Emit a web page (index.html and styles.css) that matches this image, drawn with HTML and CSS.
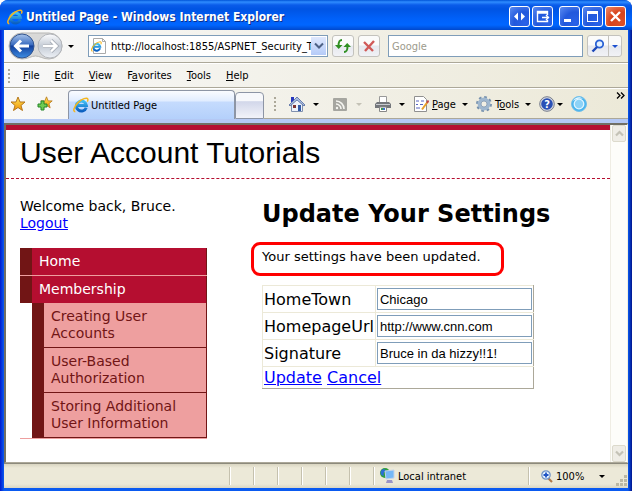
FILE: index.html
```html
<!DOCTYPE html>
<html lang="en">
<head>
  <meta charset="UTF-8">
  <meta name="viewport" content="width=device-width, initial-scale=1.0">
  <title>Untitled Page</title>
  <link rel="stylesheet" href="styles.css">
</head>
<body>
  <!-- shared drawings -->
  <svg class="defs" width="0" height="0" aria-hidden="true">
    <defs>
      <linearGradient id="blue" x1="0" y1="0" x2="0" y2="1">
        <stop offset="0" stop-color="#3fc0f4"/>
        <stop offset="1" stop-color="#0c5fc0"/>
      </linearGradient>
      <linearGradient id="gold" x1="0" y1="0" x2="0" y2="1">
        <stop offset="0" stop-color="#ffe65a"/>
        <stop offset="1" stop-color="#ee9205"/>
      </linearGradient>
      <linearGradient id="back" x1="0" y1="0" x2="0" y2="1">
        <stop offset="0" stop-color="#a9c4ea"/>
        <stop offset="0.45" stop-color="#3a6cc0"/>
        <stop offset="0.5" stop-color="#123f9c"/>
        <stop offset="1" stop-color="#3f8fe4"/>
      </linearGradient>
      <linearGradient id="fwd" x1="0" y1="0" x2="0" y2="1">
        <stop offset="0" stop-color="#fdfdfe"/>
        <stop offset="0.5" stop-color="#c4cbd5"/>
        <stop offset="1" stop-color="#eef1f6"/>
      </linearGradient>
      <symbol id="ie" viewBox="0 0 16 16">
        <path d="M13.2 10.6A5 5 0 1 1 13.4 8.4H5" fill="none" stroke="url(#blue)" stroke-width="3"/>
        <path d="M2.3 14.8C-.6 14.6 1 9.600 5 5.600 9 1.600 14 .2 14.800 2c.3.8 0 1.700-.5 2.600" fill="none" stroke="#f5b61e" stroke-width="1.500"/>
      </symbol>
      <symbol id="star" viewBox="0 0 16 16">
        <path d="M8 1l2 5h5l-4 3.500 1.500 5L8 11.500l-4.500 3 1.500-5L1 6h5z" fill="url(#gold)" stroke="#b5771c"/>
      </symbol>
    </defs>
  </svg>

  <div class="window">
    <header class="titlebar">
      <svg class="icon16" viewBox="0 0 16 16"><use href="#ie"/></svg>
      <span class="caption">Untitled Page - Windows Internet Explorer</span>
      <div class="controls">
        <button class="ctl" aria-label="Move">
          <svg width="19" height="19" viewBox="0 0 19 19"><path d="M8 5.500v8l-4-4zM11 5.500v8l4-4z" fill="#fff"/></svg>
        </button>
        <button class="ctl gap" aria-label="Send to screen">
          <svg width="19" height="19" viewBox="0 0 19 19"><path d="M14.500 8V4.500h-10v10h10V13M4 6h11M9 10.500h6M13 8l2.500 2.500L13 13" fill="none" stroke="#fff" stroke-width="1.400"/></svg>
        </button>
        <button class="ctl" aria-label="Minimize">
          <svg width="19" height="19" viewBox="0 0 19 19"><path d="M4 12h7v3H4z" fill="#fff"/></svg>
        </button>
        <button class="ctl" aria-label="Maximize">
          <svg width="19" height="19" viewBox="0 0 19 19"><path d="M4 4h11v11H4zM5 7v7h9V7z" fill="#fff" fill-rule="evenodd"/></svg>
        </button>
        <button class="ctl close" aria-label="Close">
          <svg width="19" height="19" viewBox="0 0 19 19"><path d="M5 5l9 9M14 5l-9 9" stroke="#fff" stroke-width="2.400"/></svg>
        </button>
      </div>
    </header>

    <div class="chrome">
      <div class="addressbar">
        <button class="travel" aria-label="Back and forward">
          <svg width="56" height="28" viewBox="0 0 56 28">
            <path d="M14 1h27a13 13 0 0 1 0 26c-6 0-9-3-13.500-3S20 27 14 27a13 13 0 0 1 0-26z" fill="#d9d9d8" stroke="#b7b7b5"/>
            <circle cx="14" cy="14" r="12" fill="url(#back)" stroke="#33558f"/>
            <path d="M21 14H9M13 8.500L7.500 14l5.500 5.500" fill="none" stroke="#fff" stroke-width="3"/>
            <circle cx="42" cy="14" r="12" fill="url(#fwd)" stroke="#b3b6bb"/>
            <path d="M35 14h12M43 8.500l5.500 5.500-5.500 5.500" fill="none" stroke="#a7adb6" stroke-width="4"/>
            <path d="M35 14h12M43 8.500l5.500 5.500-5.500 5.500" fill="none" stroke="#fff" stroke-width="2.400"/>
          </svg>
        </button>
        <span class="arrow"></span>
        <div class="address">
          <svg width="16" height="18" viewBox="0 0 16 18">
            <path d="M2.500 1.500h9l3 3v12h-12z" fill="#fff" stroke="#aaa"/>
            <path d="M11.500 1.500v3h3" fill="none" stroke="#aaa"/>
            <use href="#ie" x="0" y="4" width="11" height="11"/>
          </svg>
          <input class="url" type="text" aria-label="Address" value="http://localhost:1855/ASPNET_Security_Tutorial">
          <button class="drop" aria-label="Show addresses">
            <svg width="10" height="8" viewBox="0 0 10 8"><path d="M1 1.500l4 4 4-4" fill="none" stroke="#4d6185" stroke-width="2"/></svg>
          </button>
        </div>
        <button class="tool" aria-label="Refresh">
          <svg width="16" height="14" viewBox="0 0 16 14">
            <path d="M7 1C4 1 3.500 3 3.500 7M9 13c3 0 3.500-2 3.500-6" fill="none" stroke="#2f8f22" stroke-width="2"/>
            <path d="M0 6h7.500L3.700 10zM8.500 8H16l-3.800-4z" fill="#2f8f22"/>
          </svg>
        </button>
        <button class="tool" aria-label="Stop">
          <svg width="14" height="14" viewBox="0 0 14 14"><path d="M2 3l9 9M12 2L3 12" stroke="#d05a58" stroke-width="2.400"/></svg>
        </button>
        <input class="search" type="text" aria-label="Search" placeholder="Google">
        <div class="split">
          <button class="find" aria-label="Search">
            <svg width="14" height="14" viewBox="0 0 14 14"><circle cx="8.500" cy="5" r="3.700" fill="#e3f0ff" stroke="#2a62d5" stroke-width="1.800"/><path d="M6 8l-4.500 4.500" stroke="#1c47b8" stroke-width="2.400"/></svg>
          </button>
          <button class="more" aria-label="Search options"><span class="arrow blue"></span></button>
        </div>
      </div>

      <nav class="menubar">
        <span class="grip"></span>
        <button><u>F</u>ile</button>
        <button><u>E</u>dit</button>
        <button><u>V</u>iew</button>
        <button>F<u>a</u>vorites</button>
        <button><u>T</u>ools</button>
        <button><u>H</u>elp</button>
      </nav>

      <div class="tabbar">
        <div class="favorites">
          <button aria-label="Favorites"><svg class="icon16" viewBox="0 0 16 16"><use href="#star"/></svg></button>
          <button aria-label="Add to favorites">
            <svg class="icon16" viewBox="0 0 16 16">
              <use href="#star" x="3" y="0" width="13" height="13"/>
              <path d="M4 5h3v3h3v3H7v3H4v-3H1V8h3z" fill="#6ecb52" stroke="#24852a"/>
            </svg>
          </button>
        </div>
        <button class="tab"><svg class="icon16" viewBox="0 0 16 16"><use href="#ie"/></svg>Untitled Page</button>
        <button class="newtab" aria-label="New tab"></button>
        <div class="commands">
          <span class="grip"></span>
          <button class="home" aria-label="Home">
            <svg class="icon16" viewBox="0 0 16 16">
              <path d="M2.500 8v7.500h11V8L8 3z" fill="#eef2fa" stroke="#8090ae"/>
              <path d="M2 1h3v5H2z" fill="#2637bd"/>
              <path d="M0 9l8-8 8 8-1 1-7-6-7 6z" fill="#a9bde0" stroke="#53699e" stroke-width=".8"/>
              <path d="M4 9h3v3H4z" fill="#7b3434"/>
              <path d="M9 9h3v6H9z" fill="#315aa8"/>
            </svg>
            <span class="arrow"></span>
          </button>
          <button class="feeds" aria-label="Feeds" disabled>
            <svg class="icon16" viewBox="0 0 16 16">
              <rect x="1" y="2" width="14" height="13" rx="1" fill="#a6a6a0"/>
              <path d="M4 8a5 5 0 0 1 5 5M4 5a8 8 0 0 1 8 8" fill="none" stroke="#f5f5f0" stroke-width="1.600"/>
              <circle cx="5" cy="12" r="1.200" fill="#f5f5f0"/>
            </svg>
            <span class="arrow dim"></span>
          </button>
          <button class="print" aria-label="Print">
            <svg class="icon16" viewBox="0 0 16 16">
              <path d="M4.500 6V.5h7V6" fill="#fff" stroke="#999"/>
              <path d="M2 6h12l2 2v4H0V8z" fill="#74777b"/>
              <path d="M1 8h14v1H1z" fill="#c9ccd0"/>
              <path d="M4.500 11h7v4.500h-7z" fill="#fff" stroke="#888"/>
              <path d="M6 12h2v2H6z" fill="#3c9a4e"/><path d="M8 12h2v2H8z" fill="#3a6fd0"/>
            </svg>
            <span class="arrow"></span>
          </button>
          <button class="page">
            <svg class="icon16" viewBox="0 0 16 16">
              <path d="M1.500.5h9l3 3v12h-12z" fill="#fff" stroke="#909090"/>
              <path d="M3 5h3M8 5h3M3 12h4" stroke="#5865c0"/>
              <path d="M3 8.500h2M7 8.500h3" stroke="#5865c0"/>
              <path d="M14.500 6L9 13.500" stroke="#e9a12c" stroke-width="2"/>
              <path d="M15.500 4.500L14 7" stroke="#c54848" stroke-width="2"/>
            </svg>
            <span class="label"><u>P</u>age</span>
            <span class="arrow"></span>
          </button>
          <button class="tools">
            <svg class="icon16" viewBox="0 0 16 16">
              <circle cx="8" cy="8" r="6.700" fill="none" stroke="#7590ad" stroke-width="2.500" stroke-dasharray="2.600 2.660"/>
              <circle cx="8" cy="8" r="4.700" fill="none" stroke="#9fb7cf" stroke-width="3.400"/>
              <circle cx="8" cy="8" r="3" fill="#f1efe4" stroke="#7d96b2" stroke-width=".8"/>
            </svg>
            <span class="label">T<u>o</u>ols</span>
            <span class="arrow"></span>
          </button>
          <button class="help" aria-label="Help">
            <svg class="icon16" viewBox="0 0 16 16">
              <circle cx="8" cy="8" r="7.300" fill="#d5d8e0" stroke="#777d8c"/>
              <circle cx="8" cy="8" r="5.800" fill="#2950b5"/>
              <text class="mark" x="8" y="12" text-anchor="middle">?</text>
            </svg>
            <span class="arrow"></span>
          </button>
          <button class="orb" aria-label="Add-on">
            <svg class="icon16" viewBox="0 0 16 16">
              <circle cx="8" cy="8" r="7.500" fill="#49b4ee" stroke="#74bfe8"/>
              <circle cx="8" cy="8" r="4.800" fill="#8cd2f7" stroke="#dff4ff" stroke-width="1.300"/>
              <path d="M2 5c2-4 7-5 10-2-4-1-7 0-10 2z" fill="#e8f8ff"/>
            </svg>
          </button>
          <button class="overflow" aria-label="More commands">
            <svg width="9" height="7" viewBox="0 0 9 7"><path d="M1 .5l3 3-3 3M5 .5l3 3-3 3" fill="none" stroke="#000" stroke-width="1.300"/></svg>
          </button>
        </div>
      </div>
    </div>

    <div class="viewport">
      <main class="document">
        <h1 class="site-title">User Account Tutorials</h1>
        <div class="columns">
          <aside class="sidebar">
            <div class="login">Welcome back, Bruce.<br><a href="#">Logout</a></div>
            <ul class="sitemenu">
              <li><a href="#">Home</a></li>
              <li>
                <a href="#">Membership</a>
                <ul>
                  <li><a href="#">Creating User Accounts</a></li>
                  <li><a href="#">User-Based Authorization</a></li>
                  <li><a href="#">Storing Additional User Information</a></li>
                </ul>
              </li>
            </ul>
          </aside>
          <section class="content">
            <h2>Update Your Settings</h2>
            <p class="message">Your settings have been updated.</p>
            <form>
              <table class="details">
                <tr>
                  <td><label for="town">HomeTown</label></td>
                  <td><input id="town" type="text" value="Chicago"></td>
                </tr>
                <tr>
                  <td><label for="homepage">HomepageUrl</label></td>
                  <td><input id="homepage" type="text" value="http://www.cnn.com"></td>
                </tr>
                <tr>
                  <td><label for="signature">Signature</label></td>
                  <td><input id="signature" type="text" value="Bruce in da hizzy!!1!"></td>
                </tr>
                <tr>
                  <td colspan="2"><a href="#">Update</a> <a href="#">Cancel</a></td>
                </tr>
              </table>
            </form>
          </section>
        </div>
      </main>
      <div class="scrollbar">
        <button aria-label="Scroll up"><svg width="9" height="7" viewBox="0 0 9 7"><path d="M1 5.500L4.500 2 8 5.500" fill="none" stroke="#c4c2b6" stroke-width="2.200"/></svg></button>
        <button aria-label="Scroll down"><svg width="9" height="7" viewBox="0 0 9 7"><path d="M1 1.500L4.500 5 8 1.500" fill="none" stroke="#c4c2b6" stroke-width="2.200"/></svg></button>
      </div>
    </div>

    <footer class="statusbar">
      <div class="pane"></div>
      <div class="pane small"></div>
      <div class="pane small"></div>
      <div class="pane small"></div>
      <div class="pane small"></div>
      <div class="pane small"></div>
      <div class="pane small"></div>
      <div class="pane zone">
        <svg class="icon16" viewBox="0 0 16 16">
          <circle cx="6" cy="5" r="5" fill="#2f9f3e"/>
          <path d="M2 3c2-3 5-2 4 0S4 5 5 8C2 8 1 5 2 3z" fill="#2a6fd6"/>
          <path d="M6 3l9-1v8l-8 1z" fill="#75b8f7" stroke="#c3d4ea"/>
          <path d="M8 12h5l1 3H7z" fill="#9a94c6"/>
        </svg>
        Local intranet
      </div>
      <div class="pane zoom">
        <svg width="12" height="13" viewBox="0 0 12 13">
          <path d="M7 8l4 4" stroke="#b07848" stroke-width="2.200"/>
          <circle cx="5" cy="5" r="4.200" fill="#e4f2ff" stroke="#6f92c4" stroke-width="1.200"/>
          <path d="M5 2.500v5M2.500 5h5" stroke="#1f54c4" stroke-width="1.800"/>
        </svg>
        <span>100%</span>
        <span class="arrow"></span>
      </div>
      <svg class="resize" width="12" height="12" viewBox="0 0 12 12">
        <path d="M8 0h3v3H8zM4 4h3v3H4zM8 4h3v3H8zM0 8h3v3H0zM4 8h3v3H4zM8 8h3v3H8z" fill="#bcb8a4"/>
      </svg>
    </footer>
  </div>
</body>
</html>
```
FILE: styles.css
```css
*{
  box-sizing: border-box;
  margin: 0;
  padding: 0;
}
body{
  background: #fff;
  color: #000;
  font-family: "DejaVu Sans Condensed", Tahoma, sans-serif;
  font-size: 11px;
}
button{
  border: none;
  background: none;
  color: inherit;
  font: inherit;
  white-space: nowrap;
}
svg{
  display: block;
  flex: none;
}
.defs{
  position: absolute;
}
.icon16{
  width: 16px;
  height: 16px;
}

.window{
  display: flex;
  flex-direction: column;
  min-height: 100vh;
  padding: 0 4px 3px;
  background: linear-gradient(90deg, #0019cf, #0a5af0 4px, #0a5af0 calc(100% - 4px), #00138c);
  border-radius: 8px 8px 0 0;
  overflow: hidden;
}

/* title bar */
.titlebar{
  display: flex;
  align-items: center;
  height: 30px;
  margin: 0 -4px;
  padding: 3px 6px 0 7px;
  background: linear-gradient(#0053d8 0, #2f8cff 2px, #0a5cea 5px, #0054e3 9px, #0061fa 19px, #0066ff 25px, #0048cc 100%);
}
.caption{
  flex: 1;
  margin-left: 3px;
  color: #fff;
  font-size: 12px;
  font-weight: bold;
  text-shadow: 1px 1px 0 #0a2f8c;
  white-space: nowrap;
}
.controls{
  display: flex;
  gap: 2px;
}
.ctl{
  width: 21px;
  height: 21px;
  border: 1px solid #fff;
  border-radius: 3px;
  background: radial-gradient(circle at 80% 85%, #2a62e8, #2258dc 50%, #5c8cf2);
}
.ctl.gap{
  margin-right: 4px;
}
.ctl.close{
  background: radial-gradient(circle at 80% 85%, #dc5028, #d8431c 50%, #f08c6c);
}

/* toolbars */
.chrome{
  background: linear-gradient(90deg, #f8f8f8, #ece9d8);
}
.addressbar{
  display: flex;
  align-items: center;
  height: 33px;
  padding: 0 6px 0 4px;
  border-bottom: 1px solid #aca899;
}
.arrow{
  flex: none;
  border: 3px solid transparent;
  border-top-color: #000;
  border-bottom: none;
}
.arrow.blue{
  border-top-color: #1c50d0;
}
.arrow.dim{
  border-top-color: #c4c2b6;
}
.travel + .arrow{
  margin: 0 14px 0 4px;
}
.address{
  display: flex;
  flex: 1;
  align-items: center;
  height: 22px;
  margin-right: 4px;
  padding: 1px 1px 1px 2px;
  border: 1px solid #7f9db9;
  background: #fff;
}
.url{
  flex: 1;
  width: 0;
  min-width: 0;
  margin-left: 4px;
  border: none;
  outline: none;
  font: inherit;
}
.drop{
  display: flex;
  align-items: center;
  justify-content: center;
  width: 15px;
  height: 18px;
  background: linear-gradient(#dfe8fd, #b5cbf8);
}
.tool{
  display: flex;
  align-items: center;
  justify-content: center;
  width: 22px;
  height: 22px;
  margin-right: 4px;
  border: 1px solid #c3c2bd;
  border-radius: 3px;
  background: linear-gradient(#fbfbfa 45%, #e6e8ee 50%, #f1f2f6);
}
.search{
  width: 195px;
  height: 22px;
  margin: 0 4px;
  padding: 0 3px;
  border: 1px solid #7f9db9;
  background: #fff;
  font: inherit;
}
.search::placeholder{
  color: #9c9a8c;
}
.split{
  display: flex;
  width: 35px;
  height: 22px;
  border: 1px solid #c3c2bd;
  border-radius: 3px;
  background: linear-gradient(#fbfbfa 45%, #e6e8ee 50%, #f1f2f6);
}
.find, .more{
  display: flex;
  flex: 1;
  align-items: center;
  justify-content: center;
}
.find{
  flex: none;
  width: 21px;
  border-right: 1px solid #c3c2bd;
}

.menubar{
  display: flex;
  align-items: center;
  height: 25px;
  padding-left: 4px;
  border-top: 1px solid #fff;
  border-bottom: 1px solid #aca899;
}
.menubar button{
  margin-right: 15px;
}
.grip{
  flex: none;
  width: 2px;
  height: 14px;
  margin-right: 13px;
  background: repeating-linear-gradient(#aca899 0, #aca899 2px, transparent 2px, transparent 4px);
}

.tabbar{
  display: flex;
  align-items: flex-end;
  height: 35px;
  border-top: 1px solid #fff;
  border-bottom: 4px solid #b4c8f4;
}
.favorites{
  display: flex;
  align-self: center;
  gap: 11px;
  width: 64px;
  padding-left: 6px;
}
.tab{
  display: flex;
  align-items: center;
  width: 167px;
  height: 29px;
  padding-left: 4px;
  border: 1px solid #8d95a5;
  border-bottom: none;
  border-radius: 4px 4px 0 0;
  background: linear-gradient(#fafcff, #e2edff 35%, #c5dbfd 40%, #b4d0fb);
}
.tab .icon16{
  margin-right: 2px;
}
.newtab{
  width: 29px;
  height: 27px;
  border: 1px solid #8d95a5;
  border-radius: 4px 4px 0 0;
  background: linear-gradient(#f7f8fb 30%, #d2d7ea 35%, #f2f3f9);
}
.commands{
  display: flex;
  flex: 1;
  align-items: center;
  height: 29px;
  padding-left: 10px;
  border-bottom: 1px solid #aca899;
}
.commands button{
  display: flex;
  align-items: center;
  margin-right: 13px;
}
.commands .arrow{
  margin-left: 8px;
}
.commands .label{
  margin-left: 3px;
}
.commands .label + .arrow{
  margin-left: 6px;
}
.commands .print,
.commands .page,
.commands .tools,
.commands .help{
  margin-right: 8px;
}
.commands .help .arrow{
  margin-left: 2px;
}
.commands .overflow{
  align-self: flex-start;
  margin: 2px 3px 0 auto;
}
.mark{
  fill: #fff;
  font-size: 11px;
  font-weight: bold;
}

/* page area */
.viewport{
  display: flex;
  flex: 1;
  border: 1px solid #aca899;
  border-top: 2px solid #716f64;
  border-left: 2px solid #716f64;
  border-right-color: #f1efe2;
  background: #fff;
}
.document{
  flex: 1;
  border-top: 5px solid #b50e30;
  font-family: Verdana, "DejaVu Sans", sans-serif;
}
.document a{
  color: #00f;
}
.site-title{
  height: 49px;
  padding: 5px 14px 0;
  border-bottom: 1px dashed #b50e30;
  font: 30px/36px Arial, "Liberation Sans", sans-serif;
}
.columns{
  display: flex;
  gap: 55px;
  padding: 19px 14px;
}
.sidebar{
  flex: none;
  width: 187px;
  font-size: 14px;
  line-height: 17px;
}
.sitemenu{
  margin-top: 16px;
}
.sitemenu, .sitemenu ul{
  list-style: none;
}
.sitemenu li{
  border-bottom: 1px solid #ee9f9f;
}
.sitemenu a{
  display: block;
  padding: 5px 7px;
  border-right: 1px solid #711515;
  border-left: 12px solid #711515;
  background: #b50e30;
  color: #fff;
  text-decoration: none;
}
.sitemenu ul{
  margin-left: 12px;
}
.sitemenu ul li{
  border-bottom-color: #711515;
}
.sitemenu ul a{
  background: #ee9f9f;
  color: #711515;
}
.content{
  flex: 1;
}
.content h2{
  font-size: 24px;
  line-height: 32px;
}
.message{
  width: 253px;
  height: 34px;
  margin: 12px 0 9px -11px;
  padding: 4px 8px;
  border: 3px solid #f00;
  border-radius: 9px;
  font-size: 13px;
  line-height: 16px;
  white-space: nowrap;
}
.details{
  width: 272px;
  border-collapse: collapse;
  font-size: 16px;
  line-height: 19px;
  white-space: nowrap;
}
.details td{
  padding: 1px;
  border: 1px solid #ece9d8;
}
.details td:last-child{
  border-right-color: #aca899;
}
.details tr:last-child td{
  border-bottom-color: #aca899;
}
.details input{
  display: block;
  width: 155px;
  height: 22px;
  margin: 1px 0;
  padding: 0 2px;
  border: 1px solid #7f9db9;
  font: 13px Arial, "Liberation Sans", sans-serif;
}
.scrollbar{
  display: flex;
  flex-direction: column;
  justify-content: space-between;
  width: 17px;
  border-left: 1px solid #efede4;
  background: #fdfdfa;
}
.scrollbar button{
  display: flex;
  align-items: center;
  justify-content: center;
  height: 17px;
  margin: 0 1px;
  border: 1px solid #dcdacc;
  border-radius: 2px;
  background: #efede6;
}

/* status bar */
.statusbar{
  display: flex;
  align-items: center;
  height: 25px;
  border-top: 1px solid #8c8a7c;
  background: linear-gradient(#d9d5c1, #ece9d8 4px, #ece9d8 20px, #dad6c3);
}
.pane{
  display: flex;
  align-items: center;
  flex: 1;
  height: 18px;
  border-right: 1px solid #c5c1ae;
  box-shadow: 1px 0 0 #fff;
  white-space: nowrap;
}
.pane.small{
  flex: none;
  width: 24px;
}
.pane.zone{
  flex: none;
  width: 155px;
  gap: 3px;
  padding-left: 5px;
}
.pane.zoom{
  flex: none;
  width: 87px;
  gap: 3px;
  padding-left: 12px;
  border: none;
  box-shadow: none;
}
.pane.zoom .arrow{
  margin-left: 12px;
}
.resize{
  align-self: flex-end;
  margin-bottom: 1px;
}
```
